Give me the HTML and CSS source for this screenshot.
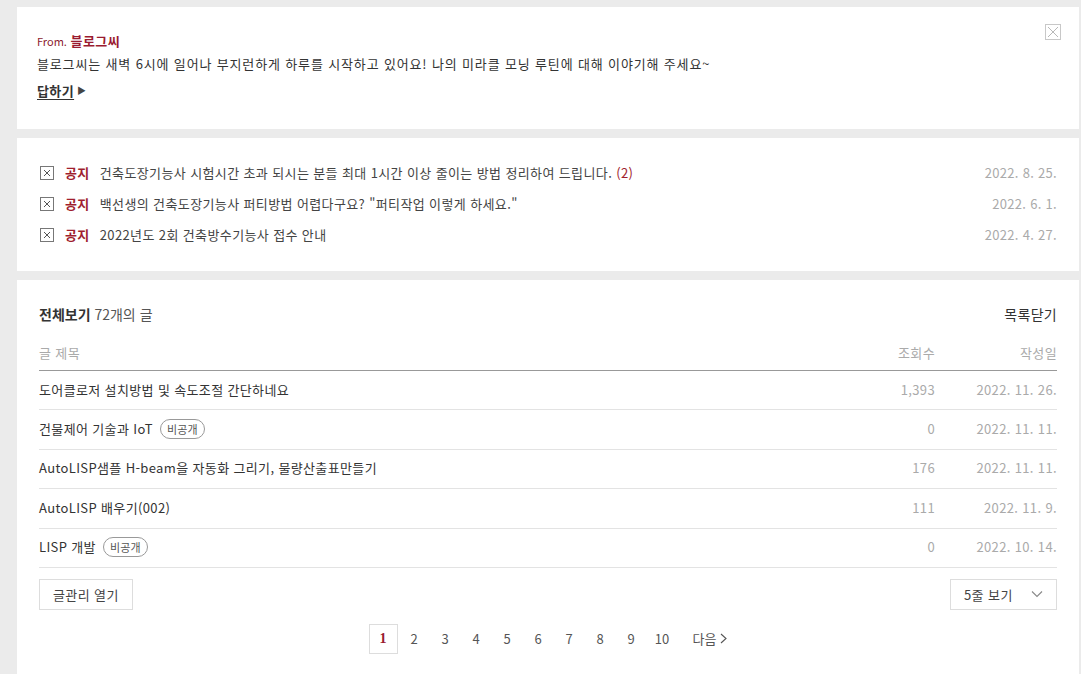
FILE: index.html
```html
<!DOCTYPE html>
<html lang="ko">
<head>
<meta charset="utf-8">
<link rel="stylesheet" href="styles.css">
</head>
<body>
<div class="page">
  <section class="card card-blog">
    <div class="from"><span class="from-label">From.</span> <strong class="from-name">블로그씨</strong></div>
    <p class="blog-msg">블로그씨는 새벽 6시에 일어나 부지런하게 하루를 시작하고 있어요! 나의 미라클 모닝 루틴에 대해 이야기해 주세요~</p>
    <a class="reply">답하기</a><span class="reply-arrow">&#9654;</span>
    <span class="close-box">
      <svg width="16" height="16" viewBox="0 0 16 16"><rect x="0.5" y="0.5" width="15" height="15" fill="none" stroke="#c8c8c8"/><path d="M3 3L13 13M13 3L3 13" stroke="#b8b8b8" stroke-width="1"/></svg>
    </span>
  </section>

  <section class="card card-notice">
    <ul class="notice-list">
      <li class="notice-row">
        <span class="chk"><svg width="14" height="14" viewBox="0 0 14 14"><rect x="0.5" y="0.5" width="13" height="13" fill="none" stroke="#777"/><path d="M4 4L10 10M10 4L4 10" stroke="#555" stroke-width="1"/></svg></span>
        <span class="tag">공지</span>
        <span class="notice-title">건축도장기능사 시험시간 초과 되시는 분들 최대 1시간 이상 줄이는 방법 정리하여 드립니다. <em class="cmt">(2)</em></span>
        <span class="notice-date">2022. 8. 25.</span>
      </li>
      <li class="notice-row">
        <span class="chk"><svg width="14" height="14" viewBox="0 0 14 14"><rect x="0.5" y="0.5" width="13" height="13" fill="none" stroke="#777"/><path d="M4 4L10 10M10 4L4 10" stroke="#555" stroke-width="1"/></svg></span>
        <span class="tag">공지</span>
        <span class="notice-title">백선생의 건축도장기능사 퍼티방법 어렵다구요? "퍼티작업 이렇게 하세요."</span>
        <span class="notice-date">2022. 6. 1.</span>
      </li>
      <li class="notice-row">
        <span class="chk"><svg width="14" height="14" viewBox="0 0 14 14"><rect x="0.5" y="0.5" width="13" height="13" fill="none" stroke="#777"/><path d="M4 4L10 10M10 4L4 10" stroke="#555" stroke-width="1"/></svg></span>
        <span class="tag">공지</span>
        <span class="notice-title">2022년도 2회 건축방수기능사 접수 안내</span>
        <span class="notice-date">2022. 4. 27.</span>
      </li>
    </ul>
  </section>

  <section class="card card-list">
    <div class="list-head">
      <div class="list-title"><strong>전체보기</strong> 72개의 글</div>
      <a class="list-close">목록닫기</a>
    </div>
    <div class="table">
      <div class="trow thead">
        <span class="c-title">글 제목</span>
        <span class="c-views">조회수</span>
        <span class="c-date">작성일</span>
      </div>
      <div class="trow">
        <span class="c-title">도어클로저 설치방법 및 속도조절 간단하네요</span>
        <span class="c-views">1,393</span>
        <span class="c-date">2022. 11. 26.</span>
      </div>
      <div class="trow">
        <span class="c-title">건물제어 기술과 IoT <span class="badge">비공개</span></span>
        <span class="c-views">0</span>
        <span class="c-date">2022. 11. 11.</span>
      </div>
      <div class="trow">
        <span class="c-title">AutoLISP샘플 H-beam을 자동화 그리기, 물량산출표만들기</span>
        <span class="c-views">176</span>
        <span class="c-date">2022. 11. 11.</span>
      </div>
      <div class="trow">
        <span class="c-title">AutoLISP 배우기(002)</span>
        <span class="c-views">111</span>
        <span class="c-date">2022. 11. 9.</span>
      </div>
      <div class="trow">
        <span class="c-title">LISP 개발 <span class="badge">비공개</span></span>
        <span class="c-views">0</span>
        <span class="c-date">2022. 10. 14.</span>
      </div>
    </div>
    <div class="list-tools">
      <button class="btn">글관리 열기</button>
      <button class="btn select">5줄 보기 <svg class="chev" width="12" height="8" viewBox="0 0 12 8"><path d="M1 1.5L6 6.5L11 1.5" fill="none" stroke="#888" stroke-width="1.1"/></svg></button>
    </div>
    <nav class="pager">
      <a class="pg current">1</a>
      <a class="pg">2</a>
      <a class="pg">3</a>
      <a class="pg">4</a>
      <a class="pg">5</a>
      <a class="pg">6</a>
      <a class="pg">7</a>
      <a class="pg">8</a>
      <a class="pg">9</a>
      <a class="pg">10</a>
      <a class="pg next">다음 <svg width="7" height="11" viewBox="0 0 7 11"><path d="M1 1L6 5.5L1 10" fill="none" stroke="#555" stroke-width="1.1"/></svg></a>
    </nav>
  </section>
</div>
</body>
</html>
```

FILE: styles.css
```css
* { box-sizing: border-box; }
html, body { margin: 0; padding: 0; }
body {
  background: #ebebeb;
  font-family: "Noto Sans CJK KR", "Noto Sans", sans-serif;
  font-size: 13px;
  color: #333;
  height: 674px;
  overflow: hidden;
}
.page {
  padding: 7px 2px 0 17px;
  display: flex;
  flex-direction: column;
  gap: 9px;
}
.card {
  background: #fff;
  position: relative;
}
/* card 1 */
.card-blog {
  height: 122px;
  padding: 25px 20px 0 20px;
}
.from { line-height: 18px; }
.from-label { font-size: 11px; color: #8b1a2e; }
.from-name { font-size: 13px; color: #9a1b30; font-weight: 700; letter-spacing: 0.4px; }
.blog-msg { margin: 5px 0 0; line-height: 18px; color: #333; letter-spacing: 0.85px; }
.reply {
  display: inline-block;
  margin-top: 9px;
  font-weight: 700;
  color: #333;
  text-decoration: underline;
  text-underline-offset: 3px;
  line-height: 18px;
  letter-spacing: 0.4px;
}
.reply-arrow { font-size: 9px; color: #444; margin-left: 3px; vertical-align: 2px; }
.close-box { position: absolute; top: 17px; right: 18px; width: 16px; height: 16px; }
.close-box svg { display: block; }

/* card 2 */
.card-notice { height: 133px; padding: 19px 22px 0 23px; }
.notice-list { list-style: none; margin: 0; padding: 0; }
.notice-row {
  display: flex;
  align-items: center;
  height: 31px;
}
.chk { width: 14px; height: 14px; margin-right: 11px; }
.chk svg { display: block; }
.tag { color: #a01e2e; font-weight: 700; margin-right: 10px; letter-spacing: 0.4px; }
.notice-title { flex: 1; color: #444; letter-spacing: 0.38px; }
.cmt { font-style: normal; color: #a01e2e; }
.notice-date { color: #aaa; letter-spacing: 0.3px; }

/* card 3 */
.card-list { padding: 20px 22px 0 22px; height: 400px; }
.list-head {
  display: flex;
  justify-content: space-between;
  align-items: center;
  height: 28px;
}
.list-title { font-size: 14px; color: #555; }
.list-title strong { color: #333; font-weight: 700; }
.list-close { color: #333; font-size: 14px; letter-spacing: 0.3px; }
.table { margin-top: 6px; }
.trow {
  display: flex;
  align-items: center;
  height: 39.4px;
  padding-bottom: 2px;
  border-bottom: 1px solid #e3e3e3;
  letter-spacing: 0.36px;
}
.trow.thead {
  height: 37px;
  padding-bottom: 0;
  border-bottom: 1px solid #999;
  color: #aaa;
}
.c-title { flex: 1; display: flex; align-items: center; gap: 7px; }
.c-views { width: 60px; text-align: right; color: #aaa; }
.trow.thead .c-views, .trow.thead .c-date { color: #aaa; }
.c-date { width: 122px; text-align: right; color: #aaa; }
.badge {
  font-size: 11px;
  border: 1px solid #999;
  border-radius: 10px;
  padding: 0 6px;
  line-height: 18px;
  color: #555;
  letter-spacing: 0.2px;
}
.list-tools {
  display: flex;
  justify-content: space-between;
  margin-top: 11px;
}
.btn {
  font-family: inherit;
  font-size: 13px;
  color: #444;
  background: #fff;
  border: 1px solid #ddd;
  height: 31px;
  padding: 0 13px;
  cursor: pointer;
  letter-spacing: 0.4px;
}
.btn.select {
  width: 107px;
  display: flex;
  align-items: center;
  justify-content: space-between;
  padding: 0 13px 0 13px;
}
.pager {
  display: flex;
  justify-content: center;
  align-items: center;
  margin-top: 14px;
  gap: 2px;
}
.pg {
  min-width: 29px;
  height: 30px;
  display: flex;
  align-items: center;
  justify-content: center;
  color: #555;
  font-size: 13px;
}
.pg.current {
  border: 1px solid #ddd;
  color: #9a1b30;
  font-weight: 700;
  font-family: "Liberation Serif", serif;
  font-size: 14px;
}
.pg.next { margin-left: 14px; gap: 4px; }
```
